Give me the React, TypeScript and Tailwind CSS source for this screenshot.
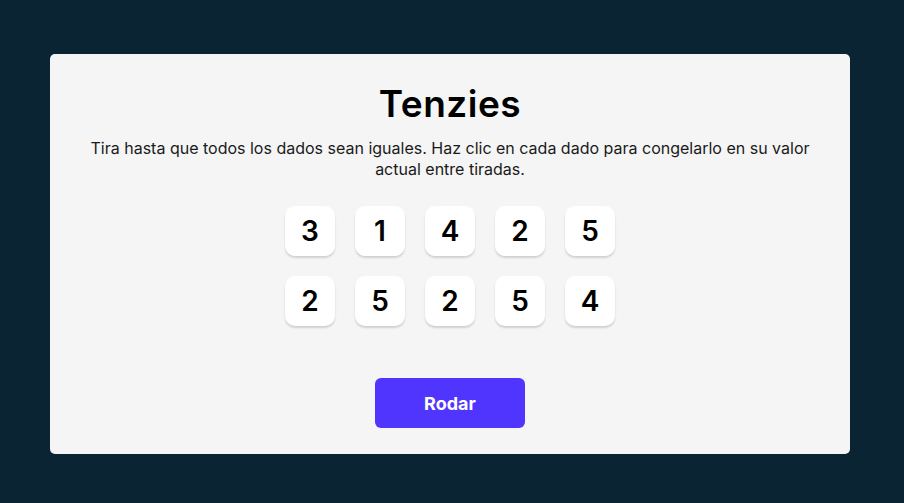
const dice = [3, 1, 4, 2, 5, 2, 5, 2, 5, 4];

export default function App() {
  return (
    <div className="min-h-screen w-full bg-[#0B2434] flex items-start pl-[50px] pt-[54px]">
      <main className="w-[800px] h-[400px] bg-[#F5F5F5] rounded-[5px] flex flex-col items-center font-['Inter',sans-serif]">
        {/* Header */}
        <h1 className="mt-[26px] text-[37px] leading-[48px] font-semibold tracking-[0.5px] text-black">Tenzies</h1>
        <p className="mt-[10px] max-w-[730px] text-center text-[16px] leading-[21px] text-[#1a1a1a]">
          Tira hasta que todos los dados sean iguales. Haz clic en cada dado para congelarlo en su valor actual entre tiradas.
        </p>

        {/* Dice */}
        <div className="mt-[26px] grid grid-cols-5 gap-5">
          {dice.map((value, index) => (
            <button
              key={index}
              className="w-[50px] h-[50px] bg-white rounded-[10px] shadow-[0_2px_2px_rgba(0,0,0,0.15)] flex items-center justify-center text-[28px] font-semibold text-black"
            >
              {value}
            </button>
          ))}
        </div>

        <button className="mt-[52px] w-[150px] h-[50px] bg-[#5035FF] rounded-[6px] text-white text-[18px] font-bold">
          Rodar
        </button>
      </main>
    </div>
  );
}
